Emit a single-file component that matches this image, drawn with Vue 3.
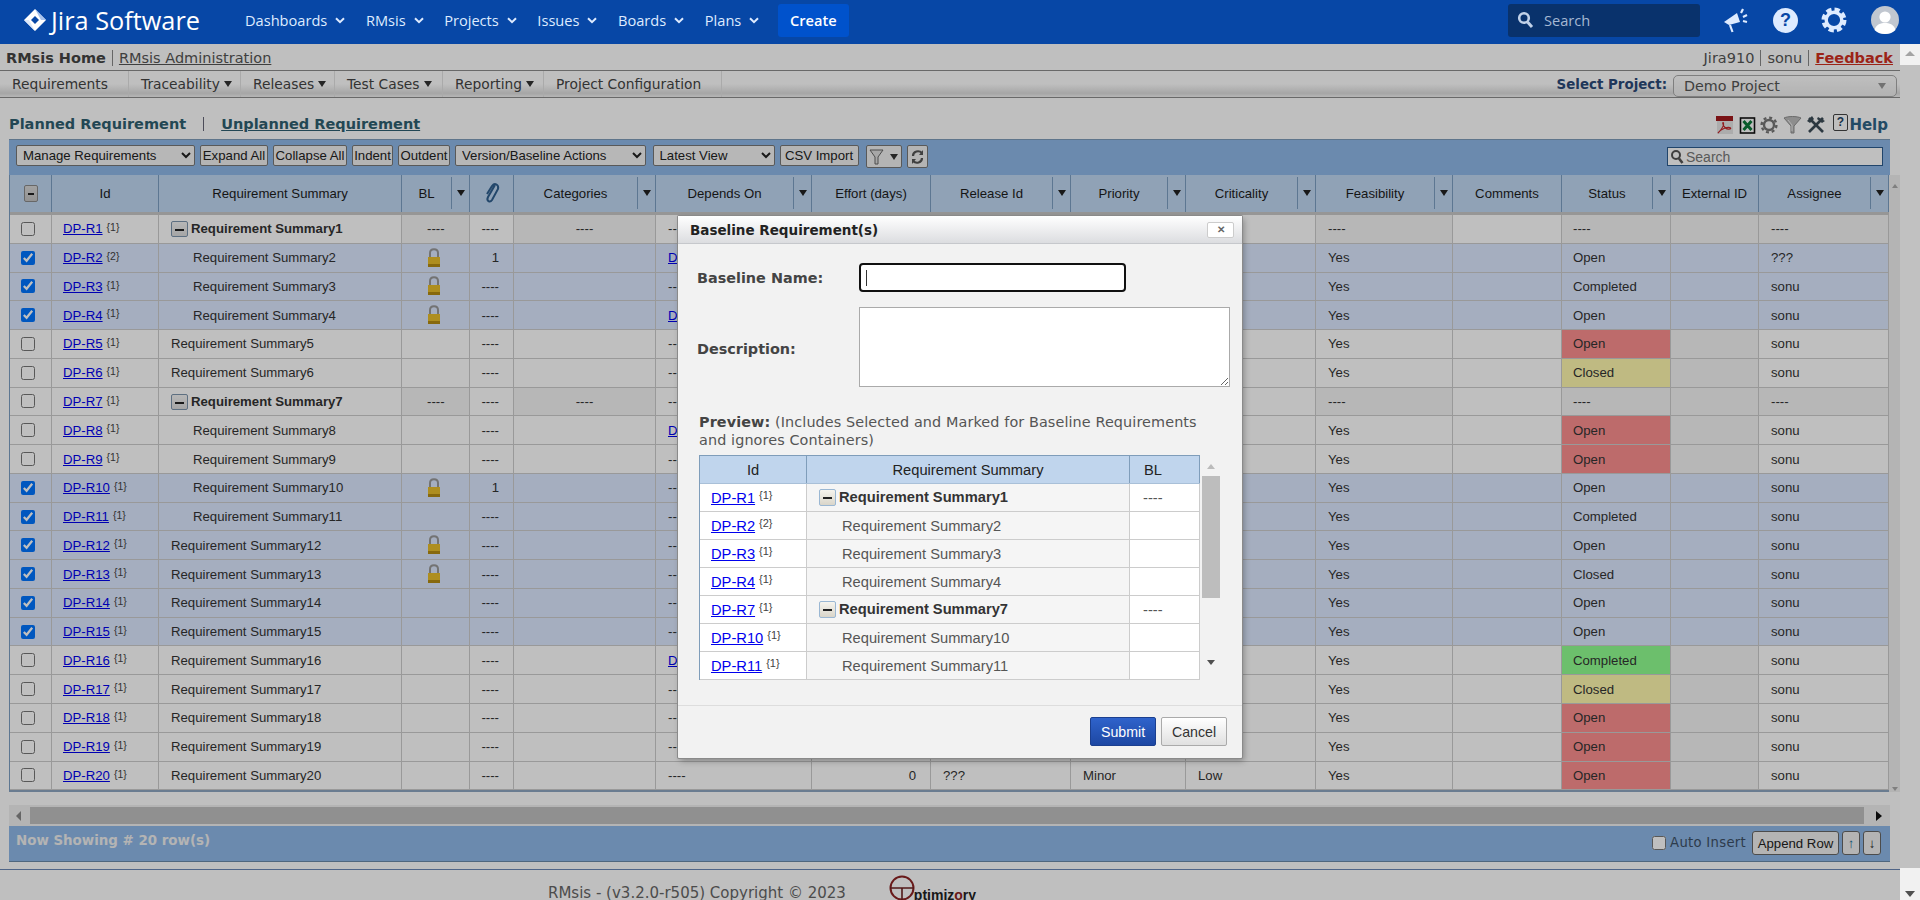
<template>
	<div class="page">
		<!-- top nav -->
		<header class="topnav">
			<div class="brand">
				<svg class="brand-mark" width="24" height="22" viewBox="0 0 24 22">
					<path d="M12 0 L23 11 L12 22 L1 11 Z M12 7 L8 11 L12 15 L16 11 Z" fill="#fff" fill-rule="evenodd"/>
					<path d="M12 0 L23 11 L18 11 Z" fill="#a9c4ee"/>
					<path d="M12 22 L1 11 L6 11 Z" fill="#dce8fa"/>
				</svg>
				<span>Jira Software</span>
			</div>
			<nav class="topnav-links">
				<a v-for="item in navItems" :key="item" class="nav-link">
					{{ item }}
					<svg width="10" height="7" viewBox="0 0 10 7"><path d="M1 1.2 L5 5.2 L9 1.2" fill="none" stroke="#deebff" stroke-width="2"/></svg>
				</a>
			</nav>
			<button class="create-btn">Create</button>
			<div class="nav-right">
				<div class="nav-search">
					<svg width="17" height="18" viewBox="0 0 17 18"><circle cx="7" cy="7" r="4.8" fill="none" stroke="#c1d1e8" stroke-width="2.6"/><path d="M10.5 11 L15 16" stroke="#c1d1e8" stroke-width="3"/></svg>
					<span>Search</span>
				</div>
				<svg class="nav-icon" width="26" height="26" viewBox="0 0 26 26">
					<path d="M1 15 L14 6 L17 15 L6 18 Z" fill="#deebff"/>
					<path d="M7 18 L9.5 25" stroke="#deebff" stroke-width="2.2"/>
					<path d="M18 6 L20 2 M20 10 L24 8 M20 14 L24 15" stroke="#deebff" stroke-width="2.2"/>
				</svg>
				<div class="help-icon">?</div>
				<svg class="nav-icon gear" width="26" height="26" viewBox="0 0 26 26">
					<circle cx="13" cy="13" r="7.8" fill="none" stroke="#deebff" stroke-width="3.4"/>
					<circle cx="13" cy="13" r="10.4" fill="none" stroke="#deebff" stroke-width="4.2" stroke-dasharray="5.2 3"/>
				</svg>
				<svg class="avatar" width="28" height="28" viewBox="0 0 28 28">
					<circle cx="14" cy="14" r="14" fill="#c1c7d0"/>
					<circle cx="14" cy="11" r="5.6" fill="#fff"/>
					<path d="M3.5 24 C5 18 10 17 14 17 C18 17 23 18 24.5 24 C21 27 18 28 14 28 C10 28 7 27 3.5 24 Z" fill="#fff"/>
				</svg>
			</div>
		</header>

		<div class="body-row">
			<main class="content">
				<div class="subhead">
					<div class="subhead-links">
						<b>RMsis Home</b>
						<a class="admin-link">RMsis Administration</a>
					</div>
					<div class="subhead-user">
						<span>Jira910</span>
						<span>sonu</span>
						<a class="feedback">Feedback</a>
					</div>
				</div>

				<div class="menubar">
					<a v-for="m in menuItems" :key="m.label" class="menu-item" :style="{ width: m.width + 'px' }">
						{{ m.label }}<i v-if="m.drop" class="caret"></i>
					</a>
					<div class="project-pick">
						<b>Select Project:</b>
						<div class="project-box">
							<span>Demo Project</span>
							<i class="caret gray"></i>
						</div>
					</div>
				</div>

				<div class="tabs">
					<div class="tab-links">
						<b>Planned Requirement</b>
						<i class="tab-sep"></i>
						<a>Unplanned Requirement</a>
					</div>
					<div class="tab-icons">
						<svg width="19" height="20" viewBox="0 0 19 20">
							<rect x="2" y="1" width="16" height="18" fill="#e6e6e6"/>
							<rect x="1" y="1" width="17" height="5" fill="#a3181c"/>
							<path d="M3 18 C7 14 9 10 8.5 8 C8 6.5 6.5 9 10.5 13 C12.5 15 16.5 14 15.5 13 C13.5 11 5.5 14 3 18 Z" fill="none" stroke="#c4262b" stroke-width="1.2"/>
						</svg>
						<svg width="17" height="20" viewBox="0 0 17 20">
							<rect x="1.5" y="3" width="14" height="15" fill="#fff" stroke="#111" stroke-width="1.6"/>
							<path d="M4.5 6 L12.5 15 M12.5 6 L4.5 15" stroke="#0c7a3a" stroke-width="3"/>
						</svg>
						<svg width="18" height="20" viewBox="0 0 18 20">
							<circle cx="9" cy="10" r="5" fill="none" stroke="#777" stroke-width="2.4"/>
							<circle cx="9" cy="10" r="7.4" fill="none" stroke="#777" stroke-width="2.4" stroke-dasharray="3 2.8"/>
						</svg>
						<svg width="19" height="20" viewBox="0 0 19 20">
							<path d="M1 3 C5 1 14 1 18 3 L11 11 L11 18 L8 18 L8 11 Z" fill="#bcbcbc" stroke="#8f8f8f"/>
							<path d="M5 5 L9 10 L9 16" fill="none" stroke="#eee"/>
						</svg>
						<svg width="20" height="20" viewBox="0 0 20 20">
							<path d="M3 3 L17 17" stroke="#3d4c57" stroke-width="2.6"/>
							<path d="M17 3 L3 17" stroke="#3d4c57" stroke-width="2.6"/>
							<path d="M1 6 L6 1 L8 4 L4 8 Z" fill="#3d4c57"/>
							<path d="M12 2 L19 6 L16 8 L11 4 Z" fill="#3d4c57"/>
						</svg>
						<div class="doc-help">?</div>
						<b class="help-label">Help</b>
					</div>
				</div>

				<section class="grid">
					<div class="toolbar">
						<select class="tool-select w-manage"><option>Manage Requirements</option></select>
						<button class="tool-btn w-expand">Expand All</button>
						<button class="tool-btn w-collapse">Collapse All</button>
						<button class="tool-btn w-indent">Indent</button>
						<button class="tool-btn w-outdent">Outdent</button>
						<select class="tool-select w-version"><option>Version/Baseline Actions</option></select>
						<select class="tool-select w-latest"><option>Latest View</option></select>
						<button class="tool-btn w-csv">CSV Import</button>
						<button class="tool-btn icon-btn w-filter">
							<svg width="15" height="18" viewBox="0 0 15 18"><path d="M1 2 L14 2 L9 9 L9 16 L6 16 L6 9 Z" fill="#dfdfdf" stroke="#666"/></svg>
							<i class="caret"></i>
						</button>
						<button class="tool-btn icon-btn w-refresh">
							<svg width="13" height="18" viewBox="0 0 13 18"><path d="M2 8 C2 3 8 2 11 5 M11 10 C11 15 5 16 2 13" fill="none" stroke="#555" stroke-width="2.2"/><path d="M8 7 L12 7 L12 2 Z M5 11 L1 11 L1 16 Z" fill="#555"/></svg>
						</button>
						<div class="grid-search">
							<svg width="14" height="16" viewBox="0 0 14 16"><circle cx="6" cy="6" r="4" fill="none" stroke="#555" stroke-width="2"/><path d="M9 9.5 L12.5 14" stroke="#555" stroke-width="2.6"/></svg>
							<span>Search</span>
						</div>
					</div>

					<div class="grid-main">
						<div class="grid-table">
							<div class="grid-head" :style="gridColumns">
								<div class="head-cell"><i class="minus-box"></i></div>
								<div v-for="col in columns" :key="col.key" class="head-cell" :class="{ 'has-menu': col.menu }">
									<svg v-if="col.key === 'attach'" width="16" height="26" viewBox="0 0 16 26"><path d="M11 4 L4 16 C2 20 6 22 8 19 L14 8 C15 4 11 1 8 5 L3 13" fill="none" stroke="#2f5f8f" stroke-width="2"/></svg>
									<span v-else>{{ col.label }}</span>
									<span v-if="col.menu" class="head-menu"><i class="caret dark"></i></span>
								</div>
							</div>
							<div v-for="row in rows" :key="row.id" class="grid-row" :class="{ selected: row.selected, container: row.kind === 'container' }" :style="gridColumns">
								<div class="cell check-cell"><input type="checkbox" :checked="row.selected" /></div>
								<div class="cell id-cell"><a class="req-link">{{ row.id }}</a><sup>{{ row.ver }}</sup></div>
								<div class="cell summary-cell" :class="row.kind">
									<i v-if="row.kind === 'container'" class="minus-box small"></i>{{ row.summary }}
								</div>
								<div class="cell bl-cell tint">
									<svg v-if="row.locked" width="14" height="20" viewBox="0 0 14 20">
										<path d="M3 10 L3 5 C3 0 11 0 11 5 L11 10" fill="none" stroke="#9a9a9a" stroke-width="2"/>
										<rect x="1" y="9" width="12" height="10" fill="#e9be2a"/>
										<rect x="1" y="16" width="12" height="3" fill="#b58d12"/>
									</svg>
									<span v-else-if="row.kind === 'container'">----</span>
								</div>
								<div class="cell attach-cell">{{ row.attach }}</div>
								<div class="cell center-cell tint"><span v-if="row.kind === 'container'">----</span></div>
								<div class="cell"><a v-if="row.depends" class="req-link">{{ row.depends }}</a><span v-else>----</span></div>
								<div class="cell effort-cell">{{ row.kind === 'container' ? '----' : '0' }}</div>
								<div class="cell">{{ row.kind === 'container' ? '----' : '???' }}</div>
								<div class="cell">{{ row.kind === 'container' ? '----' : 'Minor' }}</div>
								<div class="cell">{{ row.kind === 'container' ? '----' : 'Low' }}</div>
								<div class="cell tint">{{ row.feasibility }}</div>
								<div class="cell"></div>
								<div class="cell status-cell tint" :class="row.statusClass">{{ row.status }}</div>
								<div class="cell tint ext-cell"></div>
								<div class="cell tint">{{ row.assignee }}</div>
							</div>
						</div>
						<div class="grid-vbar">
							<i class="tiny-up"></i>
							<i class="tiny-down"></i>
						</div>
					</div>

					<div class="hbar">
						<i class="arrow-left"></i>
						<div class="hbar-thumb"></div>
						<i class="arrow-right"></i>
					</div>

					<div class="grid-foot">
						<b>Now Showing # 20 row(s)</b>
						<div class="foot-tools">
							<label class="auto-insert"><input type="checkbox" /> Auto Insert</label>
							<button class="tool-btn foot-btn w-append">Append Row</button>
							<button class="tool-btn foot-btn arrow-btn"><span class="up">↑</span></button>
							<button class="tool-btn foot-btn arrow-btn"><span>↓</span></button>
						</div>
					</div>
				</section>

				<div class="page-rule"></div>
				<footer class="page-foot">
					<span>RMsis - (v3.2.0-r505) Copyright © 2023</span>
					<div class="logo">
						<svg width="26" height="26" viewBox="0 0 26 26">
							<circle cx="13" cy="13" r="11.5" fill="none" stroke="#8c2323" stroke-width="2"/>
							<path d="M1 13 L25 13 M13 13 L13 26" stroke="#6c2020" stroke-width="1.6"/>
						</svg>
						<b>ptimiz<em>o</em>ry</b>
					</div>
				</footer>

				<div class="overlay"></div>
			</main>

			<aside class="page-scroll">
				<i class="scroll-up"></i>
				<div class="scroll-thumb"></div>
				<i class="scroll-down"></i>
			</aside>
		</div>

		<!-- baseline dialog -->
		<div class="dialog">
			<div class="dialog-head">
				<b>Baseline Requirement(s)</b>
				<button class="dialog-close">✕</button>
			</div>
			<div class="dialog-body">
				<div class="form-row name-row">
					<label>Baseline Name:</label>
					<div class="name-input"><i class="text-caret"></i></div>
				</div>
				<div class="form-row desc-row">
					<label>Description:</label>
					<textarea class="desc-input"></textarea>
				</div>
				<p class="preview-note"><b>Preview:</b> (Includes Selected and Marked for Baseline Requirements and ignores Containers)</p>
				<div class="preview">
					<div class="preview-table">
						<div class="preview-row preview-head">
							<div>Id</div>
							<div>Requirement Summary</div>
							<div class="bl-head">BL</div>
						</div>
						<div v-for="row in previewRows" :key="row.id" class="preview-row">
							<div class="p-id"><a class="req-link">{{ row.id }}</a><sup>{{ row.ver }}</sup></div>
							<div class="p-summary" :class="row.kind">
								<i v-if="row.kind === 'container'" class="minus-box light"></i>{{ row.summary }}
							</div>
							<div class="p-bl">{{ row.kind === 'container' ? '----' : '' }}</div>
						</div>
					</div>
					<div class="preview-bar">
						<i class="tri-up"></i>
						<div class="preview-thumb"></div>
						<i class="tri-down"></i>
					</div>
				</div>
			</div>
			<div class="dialog-foot">
				<button class="submit-btn">Submit</button>
				<button class="cancel-btn">Cancel</button>
			</div>
		</div>
	</div>
</template>

<script setup>
const navItems = ['Dashboards', 'RMsis', 'Projects', 'Issues', 'Boards', 'Plans']

const menuItems = [
	{ label: 'Requirements', width: 129 },
	{ label: 'Traceability', width: 112, drop: true },
	{ label: 'Releases', width: 94, drop: true },
	{ label: 'Test Cases', width: 108, drop: true },
	{ label: 'Reporting', width: 101, drop: true },
	{ label: 'Project Configuration', width: 178 },
]

// widths read off the reference, first column is the checkbox
const columns = [
	{ key: 'id', label: 'Id', width: 107 },
	{ key: 'summary', label: 'Requirement Summary', width: 243 },
	{ key: 'bl', label: 'BL', width: 68, menu: true },
	{ key: 'attach', label: '', width: 44 },
	{ key: 'categories', label: 'Categories', width: 142, menu: true },
	{ key: 'depends', label: 'Depends On', width: 156, menu: true },
	{ key: 'effort', label: 'Effort (days)', width: 119 },
	{ key: 'release', label: 'Release Id', width: 140, menu: true },
	{ key: 'priority', label: 'Priority', width: 115, menu: true },
	{ key: 'criticality', label: 'Criticality', width: 130, menu: true },
	{ key: 'feasibility', label: 'Feasibility', width: 137, menu: true },
	{ key: 'comments', label: 'Comments', width: 109 },
	{ key: 'status', label: 'Status', width: 109, menu: true },
	{ key: 'external', label: 'External ID', width: 88 },
	{ key: 'assignee', label: 'Assignee', width: 130, menu: true },
]

const gridColumns = {
	gridTemplateColumns: '42px ' + columns.map((c) => c.width + 'px').join(' '),
}

const containers = [1, 7]
const children = [2, 3, 4, 8, 9, 10, 11]
const selected = [2, 3, 4, 10, 11, 12, 13, 14, 15]
const locked = [2, 3, 4, 10, 12, 13]
const withDepends = [2, 4, 8, 16]
const statusByRow = {
	1: ['----'], 2: ['Open'], 3: ['Completed'], 4: ['Open'], 5: ['Open', 'st-red'], 6: ['Closed', 'st-yellow'],
	7: ['----'], 8: ['Open', 'st-red'], 9: ['Open', 'st-red'], 10: ['Open'], 11: ['Completed'], 12: ['Open'],
	13: ['Closed'], 14: ['Open'], 15: ['Open'], 16: ['Completed', 'st-green'], 17: ['Closed', 'st-yellow'],
	18: ['Open', 'st-red'], 19: ['Open', 'st-red'], 20: ['Open', 'st-red'],
}

const rows = Array.from({ length: 20 }, (_, i) => {
	const n = i + 1
	const isContainer = containers.includes(n)
	return {
		id: 'DP-R' + n,
		ver: n === 2 ? '{2}' : '{1}',
		summary: 'Requirement Summary' + n,
		kind: isContainer ? 'container' : children.includes(n) ? 'child' : 'root',
		selected: selected.includes(n),
		locked: locked.includes(n),
		attach: n === 2 || n === 10 ? '1' : '----',
		depends: withDepends.includes(n) ? 'DP-R1' : '',
		feasibility: isContainer ? '----' : 'Yes',
		status: statusByRow[n][0],
		statusClass: statusByRow[n][1] || '',
		assignee: isContainer ? '----' : n === 2 ? '???' : 'sonu',
	}
})

const previewRows = [1, 2, 3, 4, 7, 10, 11].map((n) => rows[n - 1])
</script>

<style>
html,
body {
	margin: 0;
	overflow: hidden;
}
</style>

<style scoped>
.page {
	position: relative;
	width: 1920px;
	height: 900px;
	overflow: hidden;
	background: #fff;
	font-family: "Liberation Sans", Arial, sans-serif;
	font-size: 13.2px;
	color: #333;
}

/* top nav */
.topnav {
	display: flex;
	align-items: center;
	box-sizing: border-box;
	height: 44px;
	padding-bottom: 4px;
	background: #0747a6;
	color: #deebff;
	font-family: "Open Sans", sans-serif;
}
.brand {
	display: flex;
	align-items: center;
	gap: 4px;
	margin-left: 23px;
	width: 222px;
	font-size: 25.3px;
	color: #fff;
}
.topnav-links {
	display: flex;
	gap: 20.6px;
}
.nav-link {
	display: flex;
	align-items: center;
	gap: 8px;
	font-size: 14.6px;
}
.create-btn {
	margin-left: 18.5px;
	width: 71px;
	height: 33px;
	border: 0;
	border-radius: 3px;
	background: #0052cc;
	color: #fff;
	font: 600 14.6px "Open Sans", sans-serif;
}
.nav-right {
	display: flex;
	align-items: center;
	margin-left: auto;
	margin-right: 21px;
}
.nav-search {
	display: flex;
	align-items: center;
	gap: 10px;
	box-sizing: border-box;
	width: 192px;
	height: 33px;
	padding-left: 9px;
	border-radius: 3px;
	background: #09326c;
	color: #a5b8d3;
	font-size: 14.6px;
}
.nav-icon {
	margin-left: 23px;
}
.help-icon {
	width: 25px;
	height: 25px;
	margin-left: 24px;
	border-radius: 50%;
	background: #deebff;
	color: #0747a6;
	font: 700 18px/25px "Liberation Sans", sans-serif;
	text-align: center;
}
.gear {
	margin-left: 23px;
}
.avatar {
	margin-left: 24px;
}

.body-row {
	display: flex;
	height: 856px;
}
.content {
	position: relative;
	flex: none;
	width: 1900px;
	height: 856px;
	overflow: hidden;
	background: #fff;
}
.overlay {
	position: absolute;
	inset: 0;
	background: rgba(0, 0, 0, 0.25);
}

/* links row */
.subhead {
	display: flex;
	justify-content: space-between;
	align-items: center;
	box-sizing: border-box;
	height: 26px;
	padding: 2px 7px 0 6px;
	font-family: "DejaVu Sans", sans-serif;
	font-size: 14.5px;
	color: #555;
}
.subhead-links,
.subhead-user {
	display: flex;
	align-items: center;
}
.subhead-links b {
	color: #444;
	padding-right: 6px;
	border-right: 1px solid #888;
	font-size: 14.5px;
}
.admin-link {
	margin-left: 6px;
	text-decoration: underline;
}
.subhead-user span {
	padding-right: 6px;
	margin-right: 6px;
	border-right: 1px solid #888;
}
.feedback {
	color: #d0301f;
	font-weight: 700;
	text-decoration: underline;
}

/* menu */
.menubar {
	display: flex;
	align-items: stretch;
	box-sizing: border-box;
	height: 28px;
	border-top: 1px solid #8c8c8c;
	border-bottom: 1px solid #8c8c8c;
	background: linear-gradient(#fff 50%, #dedede 86%, #f4f4f4);
}
.menu-item {
	display: flex;
	align-items: center;
	box-sizing: border-box;
	padding-left: 12px;
	border-right: 1px solid #e3e3e3;
	font-family: "DejaVu Sans", sans-serif;
	font-size: 13.8px;
	color: #444;
}
.caret {
	display: inline-block;
	width: 0;
	height: 0;
	margin-left: 4px;
	border-left: 4px solid transparent;
	border-right: 4px solid transparent;
	border-top: 6px solid #333;
}
.caret.gray {
	border-top-color: #999;
}
.caret.dark {
	margin: 0;
	border-top-color: #222;
}
.project-pick {
	display: flex;
	align-items: center;
	gap: 6px;
	margin-left: auto;
	margin-right: 3px;
	font-family: "DejaVu Sans", sans-serif;
	font-size: 13.4px;
	color: #2b4a78;
}
.project-box {
	display: flex;
	justify-content: space-between;
	align-items: center;
	box-sizing: border-box;
	width: 224px;
	height: 22px;
	margin-top: 3px;
	padding: 0 10px;
	border: 1px solid #aaa;
	border-radius: 5px;
	background: linear-gradient(#fff, #eee);
	font-size: 14.3px;
	color: #555;
}

/* tabs */
.tabs {
	display: flex;
	justify-content: space-between;
	height: 41px;
	font-family: "DejaVu Sans", sans-serif;
}
.tab-links {
	display: flex;
	align-items: center;
	padding: 10px 0 0 9px;
	font-size: 14.5px;
	font-weight: 700;
	color: #2f5f70;
}
.tab-sep {
	width: 1px;
	height: 14px;
	margin: 0 17px;
	background: #667;
}
.tab-links a {
	text-decoration: underline;
}
.tab-icons {
	display: flex;
	align-items: center;
	gap: 4.5px;
	padding: 12px 12px 0 0;
}
.doc-help {
	width: 13px;
	height: 15px;
	margin: -4px 0 0 2px;
	border: 1px solid #444;
	border-radius: 2px;
	background: #fff;
	font: 700 12px/15px "Liberation Sans", sans-serif;
	text-align: center;
	color: #246;
}
.help-label {
	margin-left: -3px;
	font-size: 15px;
	color: #2f6487;
}

/* grid */
.grid {
	width: 1881px;
	margin-left: 9px;
}
.toolbar {
	display: flex;
	align-items: flex-start;
	box-sizing: border-box;
	height: 36px;
	padding: 5px 0 0 7px;
	gap: 5px;
	border-top: 1px solid #7f9dba;
	background: #8fb9e8;
}
.tool-select {
	box-sizing: border-box;
	height: 21px;
	padding: 0 0 0 2px;
	border: 1px solid #777;
	border-radius: 2px;
	background-color: #f5f5f5;
	font: 13.2px "Liberation Sans", sans-serif;
	color: #222;
}
.tool-btn {
	box-sizing: border-box;
	height: 21px;
	padding: 0;
	border: 1px solid #777;
	border-radius: 2px;
	background: #f0f0f0;
	font: 13.2px "Liberation Sans", sans-serif;
	color: #222;
}
.w-manage {
	width: 179px;
}
.w-expand {
	width: 68px;
}
.w-collapse {
	width: 74px;
}
.w-indent {
	width: 41px;
}
.w-outdent {
	width: 52px;
}
.w-version {
	width: 191px;
}
.w-latest {
	width: 122px;
	margin-left: 1.5px;
}
.w-csv {
	width: 79px;
}
.w-filter {
	width: 36px;
	margin-left: 2px;
}
.w-refresh {
	width: 21px;
}
.w-append {
	width: 87px;
}
.icon-btn {
	display: flex;
	justify-content: center;
	align-items: center;
	height: 23px;
	gap: 2px;
}
.grid-search {
	display: flex;
	align-items: center;
	gap: 2px;
	box-sizing: border-box;
	width: 216px;
	height: 19px;
	margin: 2px 7px 0 auto;
	padding-left: 2px;
	border: 1px solid #2d5d8f;
	background: #fff;
	font-size: 14px;
	color: #777;
}
.grid-main {
	display: flex;
	width: 1891px;
}
.grid-table {
	box-sizing: border-box;
	width: 1880px;
	border-left: 1px solid #7c9fc3;
	border-bottom: 2px solid #8ea6c0;
}
.grid-head {
	display: grid;
	height: 40px;
	box-sizing: border-box;
	border-bottom: 3px solid #c9c9c9;
	background: #c1d9f3;
}
.head-cell {
	display: flex;
	align-items: center;
	justify-content: center;
	position: relative;
	box-sizing: border-box;
	border-right: 1px solid #7c9fc3;
	color: #1c1c1c;
	white-space: nowrap;
}
.head-cell.has-menu {
	padding-right: 18px;
}
.head-menu {
	position: absolute;
	top: 2px;
	bottom: 3px;
	right: 0;
	display: flex;
	align-items: center;
	justify-content: center;
	width: 17px;
	border-left: 1px solid #7c9fc3;
}
.minus-box {
	position: relative;
	display: inline-block;
	box-sizing: border-box;
	width: 14px;
	height: 17px;
	border: 1px solid #8a8a8a;
	border-radius: 2px;
	background: linear-gradient(#d8d8d8, #c4c4c4);
}
.minus-box::after {
	content: "";
	position: absolute;
	left: 3px;
	right: 3px;
	top: 7px;
	height: 2px;
	background: #222;
}
.minus-box.small {
	width: 17px;
	height: 16px;
	margin-right: 3px;
	border-color: #7d94ad;
	background: linear-gradient(#f4f4f4, #ddd);
	vertical-align: -4px;
}
.minus-box.small::after {
	top: 7px;
}
.minus-box.light {
	width: 17px;
	height: 17px;
	margin-right: 3px;
	border-color: #9ab7d3;
	background: linear-gradient(#f6f4ee, #d9d5c9);
	vertical-align: -4px;
}
.minus-box.light::after {
	top: 7px;
}
.grid-row {
	display: grid;
	height: 28.78px;
	box-sizing: border-box;
	border-bottom: 1px solid #cdcdcd;
	color: #333;
}
.grid-row.selected {
	background: #dce8ff;
}
.cell {
	display: flex;
	align-items: center;
	box-sizing: border-box;
	padding-left: 12px;
	border-right: 1px solid #cdcdcd;
	white-space: nowrap;
	overflow: hidden;
}
.container .tint,
.grid-row:not(.selected) .ext-cell {
	background: rgba(0, 0, 0, 0.04);
}
.check-cell {
	padding-left: 11px;
}
.check-cell input,
.auto-insert input {
	width: 14px;
	height: 14px;
	margin: 0;
	accent-color: #0075ff;
}
.id-cell {
	padding-left: 11px;
}
.status-cell {
	padding-left: 11px;
}
.req-link {
	color: #0000ee;
	text-decoration: underline;
}
sup {
	margin-left: 4px;
	font-size: 10.5px;
	line-height: 1;
	color: #444;
	align-self: flex-start;
	margin-top: 7px;
}
.summary-cell.child {
	padding-left: 34px;
}
.summary-cell.container {
	font-weight: 700;
	display: block;
	line-height: 27px;
}
.bl-cell {
	padding-left: 25px;
}
.attach-cell {
	justify-content: flex-end;
	padding: 0 14px 0 0;
}
.center-cell {
	justify-content: center;
	padding: 0;
}
.effort-cell {
	justify-content: flex-end;
	padding: 0 14px 0 0;
}
.st-red {
	background: #fc8f8f !important;
}
.st-yellow {
	background: #fff8ae !important;
}
.st-green {
	background: #90ff90 !important;
}
.grid-vbar {
	display: flex;
	flex-direction: column;
	justify-content: space-between;
	align-items: center;
	box-sizing: border-box;
	width: 11px;
	padding: 9px 0 1px;
	background: #f1f1f1;
}
.tiny-up,
.tiny-down {
	width: 0;
	height: 0;
	border-left: 3px solid transparent;
	border-right: 3px solid transparent;
}
.tiny-up {
	border-bottom: 4px solid #aaa;
}
.tiny-down {
	border-top: 4px solid #aaa;
}

/* horizontal scroll */
.hbar {
	display: flex;
	align-items: center;
	height: 21px;
	margin-top: 13px;
	background: #f1f1f1;
}
.hbar-thumb {
	width: 1834px;
	height: 17px;
	margin: 0 12px 0 9px;
	background: #c1c1c1;
}
.arrow-left,
.arrow-right {
	width: 0;
	height: 0;
	border-top: 5px solid transparent;
	border-bottom: 5px solid transparent;
}
.arrow-left {
	margin-left: 7px;
	border-right: 5px solid #888;
}
.arrow-right {
	border-left: 6px solid #111;
}
.grid-foot {
	display: flex;
	justify-content: space-between;
	box-sizing: border-box;
	height: 36px;
	padding: 4px 9px 0 7px;
	border-bottom: 1px solid #6b8aa8;
	background: #8fb9e8;
	font-family: "DejaVu Sans", sans-serif;
	font-size: 13.4px;
}
.grid-foot b {
	padding-top: 3px;
	color: #f0f0f0;
}
.foot-tools {
	display: flex;
	align-items: flex-start;
	gap: 2px;
	padding-top: 1px;
}
.auto-insert {
	display: flex;
	align-items: center;
	gap: 4px;
	margin: 4px 4px 0 0;
	font-size: 13.2px;
	letter-spacing: 0.3px;
	color: #3d4f66;
}
.foot-btn {
	height: 24px;
	border-color: #666;
	border-radius: 3px;
}
.arrow-btn {
	width: 18px;
	margin-left: 1px;
	font-weight: 700;
}
.arrow-btn .up {
	color: #0b5f8c;
}

.page-rule {
	height: 1px;
	margin-top: 7px;
	background: #6b87b5;
}
.page-foot {
	display: flex;
	gap: 43px;
	padding: 5px 0 0 548px;
	font-family: "DejaVu Sans", sans-serif;
	font-size: 15px;
	color: #666;
}
.page-foot > span {
	margin-top: 9px;
}
.logo {
	display: flex;
}
.logo b {
	margin: 12px 0 0 -1px;
	color: #222;
	font-family: "Liberation Sans", sans-serif;
	font-size: 14px;
}
.logo em {
	color: #8c2323;
	font-style: normal;
}

/* page scrollbar */
.page-scroll {
	display: flex;
	flex-direction: column;
	align-items: center;
	box-sizing: border-box;
	width: 20px;
	height: 856px;
	padding: 7px 0 3px;
	background: #f1f1f1;
}
.scroll-up,
.scroll-down {
	width: 0;
	height: 0;
	border-left: 5px solid transparent;
	border-right: 5px solid transparent;
}
.scroll-up {
	border-bottom: 5px solid #a3a3a3;
}
.scroll-down {
	margin-top: auto;
	border-top: 6px solid #505050;
}
.scroll-thumb {
	width: 100%;
	height: 803px;
	margin-top: 9px;
	background: #c1c1c1;
}

/* dialog */
.dialog {
	position: absolute;
	left: 678px;
	top: 216px;
	display: flex;
	flex-direction: column;
	box-sizing: border-box;
	width: 564px;
	height: 542px;
	border-radius: 1px;
	background: #f2f2f2;
	box-shadow: 0 0 0 1px #8a8a8a, 2px 3px 6px rgba(0, 0, 0, 0.3);
	font-family: "DejaVu Sans", sans-serif;
}
.dialog-head {
	display: flex;
	justify-content: space-between;
	align-items: center;
	box-sizing: border-box;
	height: 28px;
	padding: 0 8px 0 12px;
	border-bottom: 1px solid #c6c8cc;
	background: linear-gradient(#fff, #dcdde0);
	font-size: 13.5px;
	color: #222;
}
.dialog-close {
	width: 27px;
	height: 16px;
	padding: 0;
	border: 1px solid #ccc;
	border-radius: 2px;
	background: #fff;
	color: #666;
	font-size: 10px;
	font-weight: 700;
	line-height: 14px;
}
.dialog-body {
	padding: 0 0 0 19px;
}
.form-row {
	display: flex;
	align-items: center;
}
.form-row label {
	width: 162px;
	font-size: 14.4px;
	font-weight: 700;
	color: #444;
}
.name-row {
	margin-top: 19px;
}
.name-input {
	display: flex;
	align-items: center;
	box-sizing: border-box;
	width: 267px;
	height: 29px;
	padding-left: 5px;
	border: 2px solid #111;
	border-radius: 4px;
	background: #fff;
}
.text-caret {
	width: 1px;
	height: 16px;
	background: #333;
}
.desc-row {
	margin-top: 15px;
}
.desc-row label {
	margin-top: 4px;
}
.desc-input {
	box-sizing: border-box;
	width: 371px;
	height: 80px;
	margin: 0;
	padding: 2px;
	border: 1px solid #aaa;
	background: #fff;
	outline: none;
}
.preview-note {
	width: 510px;
	margin: 26px 0 6px 2px;
	font-size: 14.4px;
	line-height: 18px;
	letter-spacing: 0.1px;
	color: #555;
}
.preview-note b {
	color: #444;
}
.preview {
	display: flex;
	margin-left: 2px;
	height: 225px;
}
.preview-table {
	box-sizing: border-box;
	width: 501px;
	overflow: hidden;
	border-left: 1px solid #7f9dba;
	font-family: "Liberation Sans", sans-serif;
	font-size: 14.7px;
}
.preview-row {
	display: grid;
	grid-template-columns: 107px 323px 70px;
	height: 28px;
	box-sizing: border-box;
	border-bottom: 1px solid #ccc;
	color: #555;
}
.preview-row > div {
	display: flex;
	align-items: center;
	box-sizing: border-box;
	border-right: 1px solid #ccc;
	white-space: nowrap;
}
.preview-head {
	height: 29px;
	border-top: 1px solid #7f9dba;
	border-bottom: 1px solid #a9c0d8;
	background: #c0d5ed;
	color: #222;
}
.preview-head > div {
	justify-content: center;
	border-right-color: #7f9dba;
}
.preview-head .bl-head {
	justify-content: flex-start;
	padding-left: 14px;
}
.p-id {
	padding-left: 11px;
	background: #fff;
}
.p-id sup {
	margin-top: 6px;
	font-size: 11px;
}
.p-summary {
	padding-left: 35px;
	background: #f5f5f5;
}
.p-summary.container {
	display: block !important;
	padding-left: 12px;
	font-weight: 700;
	line-height: 27px;
	color: #333;
}
.p-bl {
	padding-left: 13px;
	background: #fff;
}
.preview-bar {
	display: flex;
	flex-direction: column;
	align-items: center;
	width: 18px;
	margin-left: 2px;
	padding-top: 9px;
	box-sizing: border-box;
}
.tri-up,
.tri-down {
	width: 0;
	height: 0;
	border-left: 4.5px solid transparent;
	border-right: 4.5px solid transparent;
}
.tri-up {
	border-bottom: 5px solid #bbb;
}
.tri-down {
	margin-top: 62px;
	border-top: 5px solid #505050;
}
.preview-thumb {
	width: 100%;
	height: 122px;
	margin-top: 7px;
	background: #bdbdbd;
}
.dialog-foot {
	display: flex;
	justify-content: flex-end;
	gap: 5px;
	box-sizing: border-box;
	height: 53px;
	margin-top: auto;
	padding: 11px 15px 0 0;
	border-top: 1px solid #ddd;
}
.submit-btn,
.cancel-btn {
	width: 66px;
	height: 29px;
	padding: 0;
	font: 14.2px "Liberation Sans", sans-serif;
	border-radius: 2px;
}
.submit-btn {
	border: 1px solid #1b3f8f;
	background: linear-gradient(#2f63cb, #1d47a3);
	color: #fff;
}
.cancel-btn {
	border: 1px solid #aaa;
	background: linear-gradient(#fff, #e0e0e0);
	color: #333;
}
</style>
